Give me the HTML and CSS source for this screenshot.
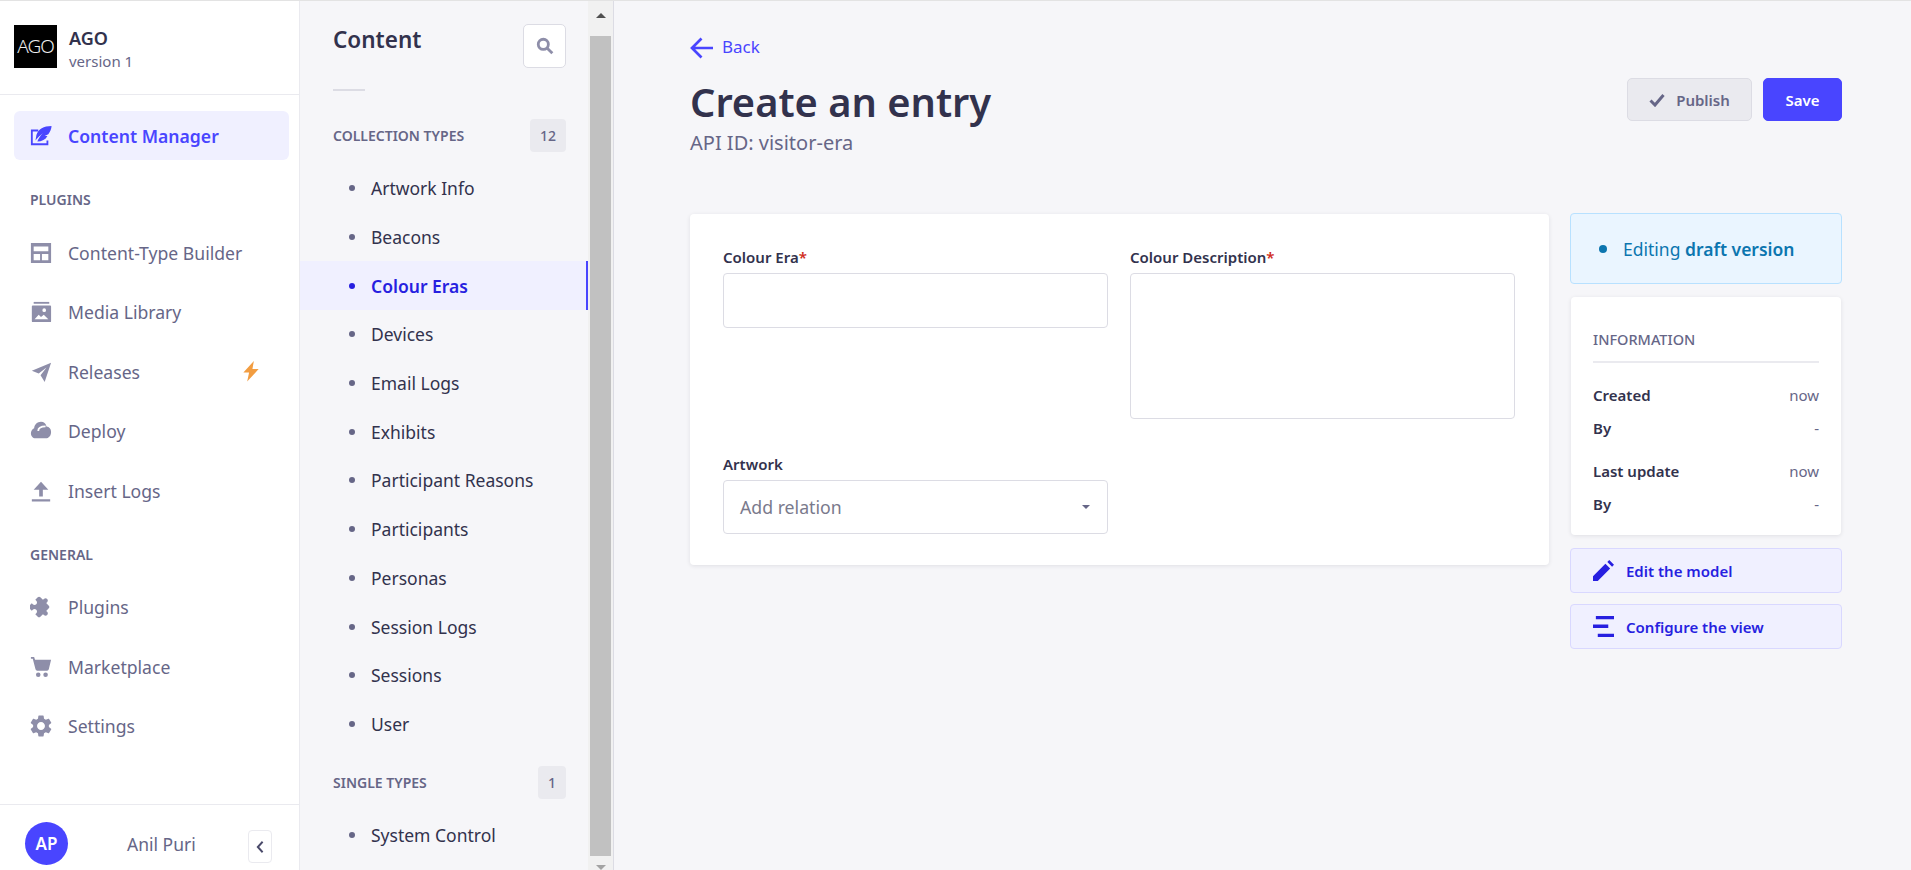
FILE: index.html
```html
<!DOCTYPE html>
<html lang="en">
<head>
  <meta charset="UTF-8">
  <title>Create an entry</title>
  <link rel="stylesheet" href="styles.css">
</head>
<body>
  <div class="app">
    <nav class="main-nav">
      <div class="brand">
        <div class="logo">AGO</div>
        <div>
          <div class="brand-name">AGO</div>
          <div class="brand-version">version 1</div>
        </div>
      </div>
      <div class="nav-body">
        <a class="nav-active">
          <svg class="nav-icon" viewBox="0 0 24 24"><path d="M1 5h8v2H3v13h15v-3h2v5H1z"/><path d="M23.500 1C15 1 9 4 7 11l-1 6c2-3 4-5 8-8-3 3-5 6-6 9 5 0 9-2 11-6h-3l4-2c2-3 3.500-6 3.500-9z"/></svg>
          Content Manager
        </a>
        <div class="nav-heading">PLUGINS</div>
        <a class="nav-link">
          <svg class="nav-icon" viewBox="0 0 24 24"><path fill-rule="evenodd" d="M1 1h22v22H1zM4 5v5h16V5zM4 13v7h7v-7zM13 13v7h7v-7z"/></svg>
          Content-Type Builder
        </a>
        <a class="nav-link">
          <svg class="nav-icon" viewBox="0 0 24 24"><path d="M4 1h17v2H4z"/><path fill-rule="evenodd" d="M3 5h19a1 1 0 0 1 1 1v16a1 1 0 0 1-1 1H3a1 1 0 0 1-1-1V6a1 1 0 0 1 1-1zM15.500 8a2 2 0 1 0 0 4 2 2 0 0 0 0-4zM5 20h15l-5-5-3 2.500L9.500 15z"/></svg>
          Media Library
        </a>
        <a class="nav-link">
          <svg class="nav-icon" viewBox="0 0 24 24"><path d="M23 2 2 10.500l7.500 3L18 7l-6.500 8.500L16 23z"/></svg>
          Releases
          <svg class="bolt" viewBox="0 0 16 22"><path d="M11 0 0 12h6L4 21.500 16 8.500H9.500z"/></svg>
        </a>
        <a class="nav-link">
          <svg class="nav-icon" viewBox="0 0 24 24"><path d="M12 2c3 0 5.500 2 6 5 3 .5 5 2.500 5 6 0 4-2.500 7-6 7H6c-3 0-5-2.500-5-5.500 0-2.500 1.500-4.500 3.500-5.500C5 5 8 2 12 2z"/><path class="cloud-cut" d="M9 12c0-3 3-5 8-5"/></svg>
          Deploy
        </a>
        <a class="nav-link">
          <svg class="nav-icon" viewBox="0 0 24 24"><path d="M12 2 4 10.500h6V18h4v-7.500h6zM2 21h20v2.500H2z"/></svg>
          Insert Logs
        </a>
        <div class="nav-heading nav-heading-general">GENERAL</div>
        <a class="nav-link">
          <svg class="nav-icon" viewBox="0 0 24 24"><path transform="rotate(45 12 12)" d="M20.500 11H19V7c0-1.100-.9-2-2-2h-4V3.500C13 2.120 11.880 1 10.500 1S8 2.120 8 3.500V5H4c-1.100 0-1.990.9-1.990 2v3.800H3.500c1.490 0 2.700 1.210 2.700 2.700s-1.210 2.700-2.700 2.700H2V20c0 1.100.9 2 2 2h3.800v-1.500c0-1.490 1.210-2.700 2.700-2.700s2.700 1.210 2.700 2.700V22H17c1.100 0 2-.9 2-2v-4h1.500c1.380 0 2.500-1.120 2.500-2.500S21.880 11 20.500 11z"/></svg>
          Plugins
        </a>
        <a class="nav-link">
          <svg class="nav-icon" viewBox="0 0 24 24"><path d="M1 1h3.500l1 3H23l-2.500 10.500a2 2 0 0 1-2 1.500H8a2 2 0 0 1-2-1.500L3 3H1zM9 18a2.500 2.500 0 1 1 0 5 2.500 2.500 0 0 1 0-5zM17 18a2.500 2.500 0 1 1 0 5 2.500 2.500 0 0 1 0-5z"/></svg>
          Marketplace
        </a>
        <a class="nav-link">
          <svg class="nav-icon" viewBox="2 2 20 20"><path d="M19.140 12.940c.04-.3.06-.61.06-.94 0-.32-.02-.64-.07-.94l2.030-1.580c.18-.14.23-.41.12-.61l-1.920-3.320c-.12-.22-.37-.29-.59-.22l-2.390.96c-.5-.38-1.030-.7-1.620-.94l-.36-2.540c-.04-.24-.24-.41-.48-.41h-3.840c-.24 0-.43.17-.47.41l-.36 2.540c-.59.24-1.130.57-1.620.94l-2.390-.96c-.22-.08-.47 0-.59.22L2.740 8.870c-.12.21-.08.47.12.61l2.030 1.580c-.05.3-.09.63-.09.94s.02.64.07.94l-2.030 1.580c-.18.14-.23.41-.12.61l1.920 3.320c.12.22.37.29.59.22l2.390-.96c.5.38 1.030.7 1.620.94l.36 2.540c.05.24.24.41.48.41h3.840c.24 0 .44-.17.47-.41l.36-2.540c.59-.24 1.130-.56 1.620-.94l2.390.96c.22.08.47 0 .59-.22l1.920-3.320c.12-.22.07-.47-.12-.61l-2.010-1.580zM12 15.600c-1.980 0-3.600-1.620-3.600-3.600s1.620-3.600 3.600-3.600 3.600 1.620 3.600 3.600-1.620 3.600-3.600 3.600z"/></svg>
          Settings
        </a>
      </div>
      <div class="nav-foot">
        <div class="avatar">AP</div>
        <div class="user-name">Anil Puri</div>
        <button class="collapse">
          <svg viewBox="0 0 10 16"><path d="M8 2 2.500 8 8 14"/></svg>
        </button>
      </div>
    </nav>

    <aside class="sub-nav">
      <div class="sub-inner">
        <div class="sub-head">
          <h2>Content</h2>
          <button class="search-btn">
            <svg viewBox="0 0 16 16"><circle cx="6.500" cy="6.500" r="4.500"/><path d="m10 10 4.500 4.500"/></svg>
          </button>
        </div>
        <div class="sub-rule"></div>
        <div class="sub-section">
          <span>COLLECTION TYPES</span>
          <span class="count count-wide">12</span>
        </div>
        <ul class="sub-list">
          <li>Artwork Info</li>
          <li>Beacons</li>
          <li class="current">Colour Eras</li>
          <li>Devices</li>
          <li>Email Logs</li>
          <li>Exhibits</li>
          <li>Participant Reasons</li>
          <li>Participants</li>
          <li>Personas</li>
          <li>Session Logs</li>
          <li>Sessions</li>
          <li>User</li>
        </ul>
        <div class="sub-section sub-section-single">
          <span>SINGLE TYPES</span>
          <span class="count">1</span>
        </div>
        <ul class="sub-list sub-list-single">
          <li>System Control</li>
        </ul>
      </div>
      <div class="scrollbar">
        <div class="arrow-up"></div>
        <div class="thumb"></div>
        <div class="arrow-down"></div>
      </div>
    </aside>

    <main class="page">
      <a class="back">
        <svg viewBox="0 0 24 22"><path d="M23 11H2M11.500 1.500 2 11l9.500 9.500"/></svg>
        <span class="back-text">Back</span>
      </a>
      <div class="page-head">
        <div>
          <h1>Create an entry</h1>
          <div class="api-id">API ID: visitor-era</div>
        </div>
        <div class="actions">
          <button class="btn-publish">
            <svg viewBox="0 0 16 14"><path d="M1.500 7.500 6 12l8.500-10"/></svg>
            Publish
          </button>
          <button class="btn-save">Save</button>
        </div>
      </div>

      <div class="columns">
        <form class="form-card">
          <div class="field">
            <label>Colour Era<span class="req">*</span></label>
            <input type="text">
          </div>
          <div class="field">
            <label>Colour Description<span class="req">*</span></label>
            <textarea></textarea>
          </div>
          <div class="field">
            <label>Artwork</label>
            <div class="select">
              Add relation
              <span class="caret"></span>
            </div>
          </div>
        </form>

        <div class="side">
          <div class="draft"><span class="draft-dot"></span><span>Editing <b>draft version</b></span></div>
          <div class="info-card">
            <div class="info-title">INFORMATION</div>
            <div class="info-rows">
              <div class="info-row"><b>Created</b><span>now</span></div>
              <div class="info-row"><b>By</b><span>-</span></div>
            </div>
            <div class="info-rows info-rows-last">
              <div class="info-row"><b>Last update</b><span>now</span></div>
              <div class="info-row"><b>By</b><span>-</span></div>
            </div>
          </div>
          <a class="side-btn">
            <svg viewBox="0 0 22 22"><path d="M0 22v-5L13 4l5 5L5 22zM15 2l2-2 5 5-2 2z"/></svg>
            Edit the model
          </a>
          <a class="side-btn side-btn-last">
            <svg viewBox="0 0 22 22"><path d="M3 0h19v3.500H3zM0 9h16v3.500H0zM5 18.500h17V22H5z"/></svg>
            Configure the view
          </a>
        </div>
      </div>
    </main>
  </div>
</body>
</html>
```

FILE: styles.css
```css
* {
  box-sizing: border-box;
}
html, body {
  margin: 0;
  height: 100%;
  overflow: hidden;
}
body {
  font-family: "Noto Sans", sans-serif;
  background-color: #f6f6f9;
  color: #32324d;
  font-size: 16px;
}
h1, h2, ul {
  margin: 0;
  padding: 0;
}
button {
  font-family: inherit;
  cursor: pointer;
}
.app {
  display: flex;
  height: 870px;
  border-top: 1px solid #e3e3e3;
}

/* left nav */
.main-nav {
  width: 300px;
  flex: none;
  background-color: #fff;
  border-right: 1px solid #eaeaef;
  display: flex;
  flex-direction: column;
}
.brand {
  height: 94px;
  padding: 24px 14px 0;
  display: flex;
  gap: 12px;
  border-bottom: 1px solid #eaeaef;
}
.logo {
  width: 43px;
  height: 43px;
  background-color: #000;
  color: #eee;
  font-size: 19px;
  font-weight: 300;
  line-height: 43px;
  text-align: center;
  letter-spacing: -1px;
  overflow: hidden;
}
.brand-name {
  font-size: 18px;
  font-weight: 600;
  line-height: 22px;
  margin-top: 2px;
}
.brand-version {
  font-size: 15px;
  line-height: 22px;
  color: #666687;
  margin-top: 1px;
}
.nav-body {
  flex: 1;
  padding: 16px 10px 0 14px;
}
.nav-active, .nav-link {
  display: flex;
  align-items: center;
  gap: 16px;
  padding-left: 16px;
  font-size: 17.600px;
}
.nav-active {
  height: 49px;
  background-color: #f0f0ff;
  border-radius: 6px;
  color: #4945ff;
  font-weight: 600;
}
.nav-active .nav-icon {
  fill: #4945ff;
}
.nav-link {
  height: 59.500px;
  color: #666687;
}
.nav-icon {
  width: 22px;
  height: 22px;
  flex: none;
  fill: #8e8ea9;
}
.cloud-cut {
  fill: none;
  stroke: #fff;
  stroke-width: 2;
}
.bolt {
  width: 16px;
  height: 21px;
  fill: #f29d41;
  margin-left: auto;
  margin-right: 30px;
}
.nav-heading {
  font-size: 14px;
  font-weight: 600;
  color: #666687;
  padding-left: 16px;
  margin-top: 29px;
  margin-bottom: 12px;
  line-height: 22px;
}
.nav-heading-general {
  margin-top: 23px;
  margin-bottom: 12px;
}
.nav-foot {
  height: 66px;
  border-top: 1px solid #eaeaef;
  display: flex;
  align-items: center;
  padding: 12px 27px 0 25px;
}
.avatar {
  width: 43px;
  height: 43px;
  border-radius: 50%;
  background-color: #4945ff;
  color: #fff;
  font-weight: 600;
  font-size: 17px;
  line-height: 43px;
  text-align: center;
}
.user-name {
  color: #666687;
  font-size: 17.500px;
  margin-left: 59px;
}
.collapse {
  width: 24px;
  height: 33px;
  margin-left: auto;
  background-color: #fff;
  border: 1px solid #eaeaef;
  border-radius: 4px;
  padding: 0;
  display: flex;
  align-items: center;
  justify-content: center;
  margin-top: 6px;
}
.collapse svg {
  width: 10px;
  height: 14px;
  fill: none;
  stroke: #4a4a6a;
  stroke-width: 2.200;
}

/* content list */
.sub-nav {
  width: 314px;
  flex: none;
  display: flex;
  border-right: 1px solid #dcdce4;
}
.sub-inner {
  width: 288px;
  flex: none;
}
.sub-head {
  display: flex;
  justify-content: space-between;
  padding: 23px 22px 0 33px;
}
.sub-head h2 {
  font-size: 22.500px;
  font-weight: 600;
  line-height: 30px;
  margin-top: 1px;
}
.search-btn {
  width: 43px;
  height: 44px;
  background-color: #fff;
  border: 1px solid #dcdce4;
  border-radius: 5px;
  padding: 0;
  display: flex;
  align-items: center;
  justify-content: center;
}
.search-btn svg {
  width: 18px;
  height: 18px;
  fill: none;
  stroke: #8e8ea9;
  stroke-width: 2.500;
}
.sub-rule {
  width: 32px;
  height: 2px;
  background-color: #dcdce4;
  margin: 21px 0 0 33px;
}
.sub-section {
  display: flex;
  justify-content: space-between;
  align-items: center;
  padding: 0 22px 0 33px;
  margin-top: 28px;
  font-size: 14px;
  font-weight: 600;
  color: #666687;
  height: 33px;
}
.count {
  height: 33px;
  min-width: 28px;
  background-color: #eaeaef;
  border-radius: 4px;
  text-align: center;
  line-height: 33px;
  font-size: 14px;
  font-weight: 500;
}
.count-wide {
  min-width: 36px;
}
.sub-list {
  list-style: none;
  margin-top: 12px;
}
.sub-list li {
  height: 48.700px;
  display: flex;
  align-items: center;
  padding-left: 71px;
  font-size: 17.500px;
  color: #32324d;
  position: relative;
}
.sub-list li::before {
  content: "";
  position: absolute;
  left: 49px;
  top: 50%;
  width: 6px;
  height: 6px;
  margin-top: -3px;
  border-radius: 50%;
  background-color: #666687;
}
.sub-list li.current {
  background-color: #f0f0ff;
  color: #271fe0;
  font-weight: 600;
  border-right: 2px solid #4945ff;
}
.sub-list li.current::before {
  background-color: #271fe0;
}
.sub-section-single {
  margin-top: 18px;
}
.sub-list-single {
  margin-top: 11px;
}
.scrollbar {
  width: 25px;
  flex: none;
  background-color: #f1f1f1;
  display: flex;
  flex-direction: column;
  align-items: center;
}
.arrow-up, .arrow-down {
  width: 0;
  height: 0;
  border-left: 5px solid transparent;
  border-right: 5px solid transparent;
}
.arrow-up {
  border-bottom: 5px solid #505050;
  margin: 12px 0 18px;
}
.arrow-down {
  border-top: 5px solid #a3a3a3;
  margin: 9px 0 0;
}
.thumb {
  width: 21px;
  flex: 1;
  background-color: #c1c1c1;
}

/* main area */
.page {
  flex: 1;
  padding: 0 69px 0 76px;
}
.back {
  display: flex;
  align-items: center;
  gap: 8px;
  height: 24px;
  margin-top: 35px;
  color: #4945ff;
  font-size: 17px;
}
.back-text {
  line-height: 22px;
  margin-bottom: 2px;
}
.back svg {
  width: 24px;
  height: 22px;
  fill: none;
  stroke: #4945ff;
  stroke-width: 2.700;
}
.page-head {
  display: flex;
  justify-content: space-between;
  margin-top: 14px;
}
.page-head h1 {
  font-size: 39.800px;
  font-weight: 600;
  line-height: 56px;
}
.api-id {
  color: #666687;
  font-size: 20px;
  line-height: 25px;
}
.actions {
  display: flex;
  gap: 11px;
  margin-top: 4px;
}
.actions button {
  height: 43px;
  border-radius: 5px;
  font-size: 15px;
  font-weight: 600;
}
.btn-publish {
  width: 125px;
  background-color: #eaeaef;
  border: 1px solid #dcdce4;
  color: #666687;
  display: flex;
  align-items: center;
  justify-content: center;
  gap: 11px;
}
.btn-publish svg {
  width: 16px;
  height: 14px;
  fill: none;
  stroke: #666687;
  stroke-width: 3;
}
.btn-save {
  width: 79px;
  background-color: #4945ff;
  border: 1px solid #4945ff;
  color: #fff;
}
.columns {
  display: flex;
  gap: 21px;
  margin-top: 58px;
  align-items: flex-start;
}
.form-card {
  width: 859px;
  height: 351px;
  margin-top: 1px;
  background-color: #fff;
  border-radius: 4px;
  box-shadow: 0 1px 4px rgba(33, 33, 52, .1);
  padding: 32px 33px 0;
  display: grid;
  grid-template-columns: 385px 385px;
  grid-template-rows: 188px auto;
  column-gap: 22px;
  row-gap: 19px;
}
.field label {
  display: block;
  font-size: 15px;
  font-weight: 600;
  line-height: 22px;
  margin-bottom: 5px;
}
.req {
  color: #d02b20;
}
.field input, .field textarea, .select {
  display: block;
  width: 385px;
  background-color: #fff;
  border: 1px solid #dcdce4;
  border-radius: 4px;
  font-family: inherit;
  resize: none;
}
.field input {
  height: 55px;
}
.field textarea {
  height: 146px;
}
.select {
  height: 54px;
  display: flex;
  align-items: center;
  justify-content: space-between;
  padding: 0 17px 0 16px;
  color: #7a7a8c;
  font-size: 17.700px;
}
.caret {
  width: 0;
  height: 0;
  border-left: 4px solid transparent;
  border-right: 4px solid transparent;
  border-top: 4px solid #666687;
}
.side {
  width: 272px;
}
.draft {
  height: 71px;
  background-color: #eaf5ff;
  border: 1px solid #b8e1ff;
  border-radius: 4px;
  display: flex;
  align-items: center;
  padding-left: 28px;
  gap: 16px;
  color: #0c75af;
  font-size: 17.500px;
}
.draft-dot {
  width: 8px;
  height: 8px;
  border-radius: 50%;
  background-color: #0c75af;
}
.draft b {
  font-weight: 600;
}
.info-card {
  width: 270px;
  height: 238px;
  margin: 13px 1px 0;
  background-color: #fff;
  border-radius: 4px;
  box-shadow: 0 1px 4px rgba(33, 33, 52, .1);
  padding: 31px 22px 0;
}
.info-title {
  font-size: 14.500px;
  font-weight: 500;
  color: #666687;
  line-height: 22px;
  padding-bottom: 11px;
  border-bottom: 2px solid #eaeaef;
}
.info-rows {
  margin-top: 22px;
}
.info-rows-last {
  margin-top: 10px;
}
.info-row {
  display: flex;
  justify-content: space-between;
  height: 33px;
  font-size: 15px;
  line-height: 20px;
}
.info-row b {
  font-weight: 600;
}
.info-row span {
  color: #666687;
}
.side-btn {
  display: flex;
  align-items: center;
  height: 45px;
  margin-top: 13px;
  background-color: #f0f0ff;
  border: 1px solid #d9d8ff;
  border-radius: 4px;
  padding-left: 22px;
  gap: 12px;
  color: #271fe0;
  font-size: 15px;
  font-weight: 600;
}
.side-btn svg {
  width: 21px;
  height: 21px;
  fill: #271fe0;
}
.side-btn-last {
  margin-top: 11px;
}
```
